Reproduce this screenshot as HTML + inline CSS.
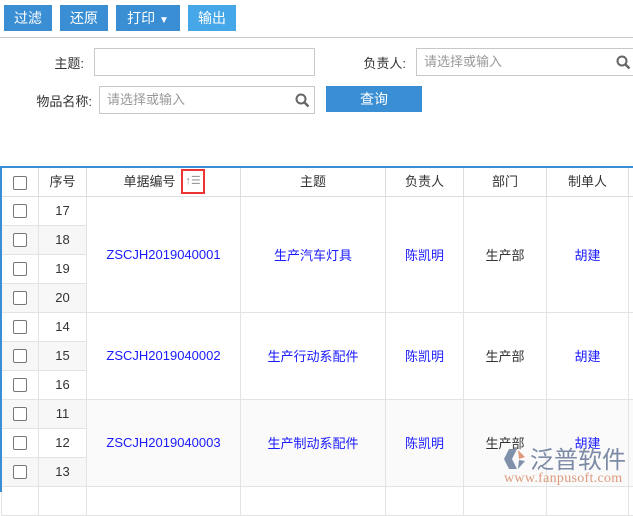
<!DOCTYPE html>
<html><head><meta charset="utf-8"><style>
*{margin:0;padding:0;box-sizing:border-box}
body{width:633px;height:492px;overflow:hidden;background:#fff;font-family:"Liberation Sans","Noto Sans CJK SC",sans-serif;font-size:13px;color:#333;position:relative}
.btn{position:absolute;top:5px;height:26px;background:#3a8fd4;color:#fff;font-size:14px;line-height:26px;text-align:center}
.lbl{position:absolute;font-size:13px;color:#333;text-align:right}
.inp{position:absolute;border:1px solid #c8c8c8;background:#fff;color:#999;font-size:13px;line-height:25px;padding-left:7px}
.mag{position:absolute;right:4px;top:6px}
table{position:absolute;left:1px;top:166px;width:647px;border-collapse:collapse;table-layout:fixed;border-top:2px solid #3a8fd4}
td{border:1px solid #e3e3e3;height:29px;text-align:center;font-size:13px;padding:0}
th{border:1px solid #ddd;border-top:none;height:29px;line-height:27px;font-weight:normal;font-size:13px;color:#333;padding:0;white-space:nowrap}
.cb{display:inline-block;width:14px;height:14px;border:1px solid #777;border-radius:2px;vertical-align:middle;background:#fff}
.b{color:#1a1aff}
.sh{background:#f7f7f7}
.gr{background:#fafafa}
</style></head><body>
<div class="btn" style="left:4px;width:48px">过滤</div>
<div class="btn" style="left:60px;width:48px">还原</div>
<div class="btn" style="left:116px;width:64px">打印 <span style="font-size:10px">▼</span></div>
<div class="btn" style="left:188px;width:48px;background:#45a6e8">输出</div>
<div style="position:absolute;left:0;top:37px;width:633px;height:1px;background:#ccc"></div>

<div class="lbl" style="left:30px;top:53px;width:54px">主题:</div>
<div class="inp" style="left:94px;top:48px;width:221px;height:28px"></div>
<div class="lbl" style="left:340px;top:53px;width:66px">负责人:</div>
<div class="inp" style="left:416px;top:48px;width:220px;height:28px">请选择或输入<svg class="mag" width="15" height="15" viewBox="0 0 15 15"><circle cx="6" cy="6" r="4.5" fill="none" stroke="#666" stroke-width="2"/><path d="M9.5 9.5L13.5 13.5" stroke="#666" stroke-width="2.4"/></svg></div>
<div class="lbl" style="left:20px;top:91px;width:72px">物品名称:</div>
<div class="inp" style="left:99px;top:86px;width:216px;height:28px">请选择或输入<svg class="mag" width="15" height="15" viewBox="0 0 15 15"><circle cx="6" cy="6" r="4.5" fill="none" stroke="#666" stroke-width="2"/><path d="M9.5 9.5L13.5 13.5" stroke="#666" stroke-width="2.4"/></svg></div>
<div class="btn" style="left:326px;top:86px;width:96px">查询</div>

<table>
<colgroup><col style="width:37px"><col style="width:48px"><col style="width:154px"><col style="width:145px"><col style="width:78px"><col style="width:83px"><col style="width:82px"><col style="width:20px"></colgroup>
<tr><th><span class="cb"></span></th><th>序号</th><th style="position:relative">单据编号<span style="position:absolute;left:94px;top:1px;border:2px solid #e33;width:24px;height:25px;line-height:20px;color:#999;font-size:11px;text-align:center">↑☰</span><span style="display:inline-block;width:28px"></span></th><th>主题</th><th>负责人</th><th>部门</th><th>制单人</th><th></th></tr>
<tr><td><span class="cb"></span></td><td>17</td><td rowspan="4" class="b">ZSCJH2019040001</td><td rowspan="4" class="b">生产汽车灯具</td><td rowspan="4" class="b">陈凯明</td><td rowspan="4">生产部</td><td rowspan="4" class="b">胡建</td><td rowspan="4"></td></tr>
<tr class="sh"><td><span class="cb"></span></td><td>18</td></tr>
<tr><td><span class="cb"></span></td><td>19</td></tr>
<tr class="sh"><td><span class="cb"></span></td><td>20</td></tr>
<tr><td><span class="cb"></span></td><td>14</td><td rowspan="3" class="b">ZSCJH2019040002</td><td rowspan="3" class="b">生产行动系配件</td><td rowspan="3" class="b">陈凯明</td><td rowspan="3">生产部</td><td rowspan="3" class="b">胡建</td><td rowspan="3"></td></tr>
<tr class="sh"><td><span class="cb"></span></td><td>15</td></tr>
<tr><td><span class="cb"></span></td><td>16</td></tr>
<tr class="sh"><td><span class="cb"></span></td><td>11</td><td rowspan="3" class="b gr">ZSCJH2019040003</td><td rowspan="3" class="b gr">生产制动系配件</td><td rowspan="3" class="b gr">陈凯明</td><td rowspan="3" class="gr">生产部</td><td rowspan="3" class="b gr">胡建</td><td rowspan="3" class="gr"></td></tr>
<tr><td><span class="cb"></span></td><td>12</td></tr>
<tr class="sh"><td><span class="cb"></span></td><td>13</td></tr>
<tr><td></td><td></td><td></td><td></td><td></td><td></td><td></td><td></td></tr>
</table>
<div style="position:absolute;left:0;top:166px;width:2px;height:326px;background:#3a8fd4"></div>

<svg style="position:absolute;left:503px;top:447px" width="24" height="24" viewBox="0 0 24 24"><path d="M6 2L14 2L9 12L14 22L6 22L1 12Z" fill="#8090aa"/><path d="M15 3L22 10L16 12Z" fill="#e09a7a"/><path d="M16 13L22 14L15 22Z" fill="#8090aa"/></svg>
<div style="position:absolute;left:530px;top:443px;font-size:24px;color:#7c8aa6;font-family:'Noto Sans CJK SC',sans-serif;letter-spacing:0px;line-height:30px">泛普软件</div>
<div style="position:absolute;left:504px;top:472px;font-size:14px;color:#dc9a7c;font-family:'Liberation Serif',serif;letter-spacing:0.3px;line-height:14px">www.fanpusoft.com</div>
</body></html>
